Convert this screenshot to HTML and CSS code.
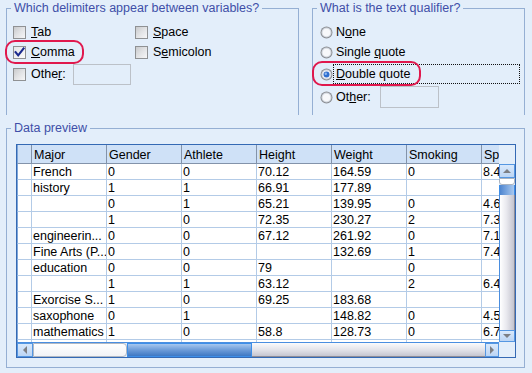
FILE: index.html
```html
<!DOCTYPE html>
<html lang="en">
<head>
<meta charset="utf-8">
<title>Text Import Wizard - Delimiters</title>
<link rel="stylesheet" href="styles.css">
</head>
<body>
<div class="dialog">
  <div class="top-row">
    <fieldset class="group group-delims">
      <legend>Which delimiters appear between variables?</legend>
      <div class="delim-grid">
        <div class="opt"><span class="cb"></span><span class="lbl"><u>T</u>ab</span></div>
        <div class="opt"><span class="cb"></span><span class="lbl"><u>S</u>pace</span></div>
        <div class="opt"><span class="cb cb-on"><svg class="check" width="11" height="11" viewBox="0 0 11 11"><path d="M1.6 5.2 L4.2 8.4 L9.6 1.4" fill="none" stroke="#1a2a8e" stroke-width="2.1" stroke-linecap="square"/></svg></span><span class="lbl"><u>C</u>omma</span></div>
        <div class="opt"><span class="cb"></span><span class="lbl">S<u>e</u>micolon</span></div>
        <div class="opt"><span class="cb"></span><span class="lbl">Othe<u>r</u>:</span><span class="field field-left"></span></div>
      </div>
    </fieldset>
    <fieldset class="group group-qual">
      <legend>What is the text qualifier?</legend>
      <div class="qual-list">
        <div class="opt">
          <svg class="rd" width="13" height="13" viewBox="0 0 13 13"><circle cx="6.5" cy="6.5" r="6" fill="#8a8d92"/><circle cx="6.5" cy="6.5" r="5" fill="#d6dbe2"/><circle cx="6.5" cy="6.5" r="3.8" fill="#f7f8fa"/></svg>
          <span class="rlbl">N<u>o</u>ne</span>
        </div>
        <div class="opt">
          <svg class="rd" width="13" height="13" viewBox="0 0 13 13"><circle cx="6.5" cy="6.5" r="6" fill="#8a8d92"/><circle cx="6.5" cy="6.5" r="5" fill="#d6dbe2"/><circle cx="6.5" cy="6.5" r="3.8" fill="#f7f8fa"/></svg>
          <span class="rlbl">Single <u>q</u>uote</span>
        </div>
        <div class="opt">
          <svg class="rd" width="13" height="13" viewBox="0 0 13 13"><circle cx="6.5" cy="6.5" r="6" fill="#8a8d92"/><circle cx="6.5" cy="6.5" r="5" fill="#d6dbe2"/><circle cx="6.5" cy="6.5" r="3.8" fill="#f7f8fa"/><circle cx="6.5" cy="6.5" r="3" fill="#2f6fcf"/><circle cx="5.8" cy="5.7" r="1.2" fill="#8fb8ee"/></svg>
          <span class="rlbl focus"><u>D</u>ouble quote</span>
        </div>
        <div class="opt">
          <svg class="rd" width="13" height="13" viewBox="0 0 13 13"><circle cx="6.5" cy="6.5" r="6" fill="#8a8d92"/><circle cx="6.5" cy="6.5" r="5" fill="#d6dbe2"/><circle cx="6.5" cy="6.5" r="3.8" fill="#f7f8fa"/></svg>
          <span class="rlbl">Ot<u>h</u>er:</span><span class="field field-right"></span>
        </div>
      </div>
    </fieldset>
  </div>

  <fieldset class="group group-preview">
    <legend>Data preview</legend>
    <div class="preview-body">
      <div class="grid-frame">
        <div class="thead">
          <div class="th rh"></div><div class="th">Major</div><div class="th">Gender</div><div class="th">Athlete</div><div class="th">Height</div><div class="th">Weight</div><div class="th">Smoking</div><div class="th last">Sp</div>
        </div>
        <div class="corner"></div>
        <div class="tbody">
          <div class="tr"><div class="td rh"></div><div class="td">French</div><div class="td">0</div><div class="td">0</div><div class="td">70.12</div><div class="td">164.59</div><div class="td">0</div><div class="td last">8.4</div></div>
          <div class="tr"><div class="td rh"></div><div class="td">history</div><div class="td">1</div><div class="td">1</div><div class="td">66.91</div><div class="td">177.89</div><div class="td"></div><div class="td last"></div></div>
          <div class="tr"><div class="td rh"></div><div class="td"></div><div class="td">0</div><div class="td">1</div><div class="td">65.21</div><div class="td">139.95</div><div class="td">0</div><div class="td last">4.6</div></div>
          <div class="tr"><div class="td rh"></div><div class="td"></div><div class="td">1</div><div class="td">0</div><div class="td">72.35</div><div class="td">230.27</div><div class="td">2</div><div class="td last">7.3</div></div>
          <div class="tr"><div class="td rh"></div><div class="td">engineerin...</div><div class="td">0</div><div class="td">0</div><div class="td">67.12</div><div class="td">261.92</div><div class="td">0</div><div class="td last">7.1</div></div>
          <div class="tr"><div class="td rh"></div><div class="td">Fine Arts (P...</div><div class="td">0</div><div class="td">0</div><div class="td"></div><div class="td">132.69</div><div class="td">1</div><div class="td last">7.4</div></div>
          <div class="tr"><div class="td rh"></div><div class="td">education</div><div class="td">0</div><div class="td">0</div><div class="td">79</div><div class="td"></div><div class="td">0</div><div class="td last"></div></div>
          <div class="tr"><div class="td rh"></div><div class="td"></div><div class="td">1</div><div class="td">1</div><div class="td">63.12</div><div class="td"></div><div class="td">2</div><div class="td last">6.4</div></div>
          <div class="tr"><div class="td rh"></div><div class="td">Exorcise S...</div><div class="td">1</div><div class="td">0</div><div class="td">69.25</div><div class="td">183.68</div><div class="td"></div><div class="td last"></div></div>
          <div class="tr"><div class="td rh"></div><div class="td">saxophone</div><div class="td">0</div><div class="td">1</div><div class="td"></div><div class="td">148.82</div><div class="td">0</div><div class="td last">4.5</div></div>
          <div class="tr"><div class="td rh"></div><div class="td">mathematics</div><div class="td">1</div><div class="td">0</div><div class="td">58.8</div><div class="td">128.73</div><div class="td">0</div><div class="td last">6.7</div></div>
          <div class="tr"><div class="td rh"></div><div class="td"></div><div class="td"></div><div class="td"></div><div class="td"></div><div class="td"></div><div class="td"></div><div class="td last"></div></div>
        </div>
        <div class="vscroll">
          <div class="sbtn vbtn-up"><span class="tri tri-up"></span></div>
          <div class="vthumb"></div>
          <div class="vblue"></div>
          <div class="vtrack"></div>
          <div class="sbtn vbtn-down"><span class="tri tri-down"></span></div>
        </div>
        <div class="hscroll">
          <div class="sbtn hbtn-left"><span class="tri tri-left"></span></div>
          <div class="hthumb"></div>
          <div class="hblue"></div>
          <div class="htrack"></div>
          <div class="sbtn hbtn-right"><span class="tri tri-right"></span></div>
        </div>
        <div class="corner"></div>
      </div>
    </div>
  </fieldset>

  <div class="mark mark-comma"></div>
  <div class="mark mark-dquote"></div>
</div>
</body>
</html>
```

FILE: styles.css
```css
* { box-sizing: border-box; }
html, body { margin: 0; padding: 0; }
body {
  width: 532px;
  height: 373px;
  overflow: hidden;
  background: #e3eefa;
  font-family: "Liberation Sans", Arial, sans-serif;
  font-size: 12.5px;
  color: #000;
}
u { text-decoration: underline; text-underline-offset: 1px; }

.dialog { position: relative; padding: 1px 7px 0 6px; }

.top-row { display: flex; gap: 13px; height: 114px; margin-bottom: 6px; }

.group {
  margin: 0;
  padding: 0;
  border: 1px solid #95afd3;
  min-width: 0;
  min-inline-size: 0;
}
.group legend {
  margin-left: 4px;
  padding: 0 3px;
  line-height: 14px;
  color: #3f4ea8;
  font-size: 12.5px;
}
.group-delims { width: 293px; height: 114px; border-bottom: none; }
.group-qual { width: 213px; height: 114px; border-bottom: none; }

.opt { display: flex; align-items: center; line-height: 14px; white-space: nowrap; }

.delim-grid {
  display: grid;
  grid-template-columns: 122px auto;
  grid-template-rows: 20px 20px 24px;
  padding: 7px 0 0 6px;
}
.cb {
  flex: none;
  width: 13px;
  height: 13px;
  margin-right: 5px;
  border: 1px solid #8f9193;
  background: linear-gradient(135deg, #c9cacc 0%, #e2e3e5 50%, #f6f6f7 100%);
}
.cb-on { background: linear-gradient(135deg, #e4e5e7 0%, #fbfbfb 100%); }
.check { display: block; overflow: visible; }

.field { display: block; flex: none; border: 1px solid #bcc1c8; }
.field-left { width: 58px; height: 21px; margin-left: 7px; }
.field-right { width: 59px; height: 22px; margin-left: 6px; }

.qual-list {
  display: grid;
  grid-template-rows: 20px 20px 24px 22px;
  padding: 7px 4px 0 7px;
}
.rd { display: block; flex: none; }
.rlbl {
  border: 1px dotted transparent;
  padding: 0 2px;
  line-height: 18px;
}
.rlbl.focus { flex: 1; border-color: #111; }

.group-preview { height: 247px; }
.preview-body { padding: 9px 8px 9px 9px; }

.grid-frame {
  width: 500px;
  height: 214px;
  border: 1px solid #3469b4;
  display: grid;
  grid-template-columns: 482px 16px;
  grid-template-rows: 19px 178px 15px;
  background: #e3eefa;
}

.thead, .tr {
  display: grid;
  grid-template-columns: 15px repeat(6, 75px) 17px;
}
.thead { overflow: hidden; background: #cfe1f7; }
.th {
  border-right: 1px solid #8393aa;
  border-bottom: 1px solid #8393aa;
  padding: 3px 0 0 2px;
  line-height: 14px;
  white-space: nowrap;
  overflow: hidden;
}
.th.rh { border-left: 1px solid #7ea6d8; }
.th.last, .td.last { border-right: none; }

.tbody { overflow: hidden; background: #fff; }
.td {
  height: 16px;
  border-right: 1px solid #b3cbe7;
  border-bottom: 1px solid #b3cbe7;
  padding: 2px 0 0 1px;
  line-height: 13px;
  white-space: nowrap;
  overflow: hidden;
  background: #fff;
}
.td.rh { border-left: 1px solid #7ea6d8; }

.corner { background: #e3eefa; }

.sbtn {
  display: flex;
  align-items: center;
  justify-content: center;
  background: linear-gradient(#d9e9fc, #bcd5f4);
  border: 1px solid #5597e2;
  flex: none;
}
.tri { width: 0; height: 0; display: block; }
.tri-up { border-left: 4px solid transparent; border-right: 4px solid transparent; border-bottom: 4px solid #7d7f84; }
.tri-down { border-left: 4px solid transparent; border-right: 4px solid transparent; border-top: 4px solid #7d7f84; }
.tri-left { border-top: 4px solid transparent; border-bottom: 4px solid transparent; border-right: 4px solid #7d7f84; }
.tri-right { border-top: 4px solid transparent; border-bottom: 4px solid transparent; border-left: 4px solid #7d7f84; }

.vscroll { display: flex; flex-direction: column; }
.vbtn-up { height: 14px; }
.vbtn-down { height: 12px; }
.vthumb {
  height: 7px;
  background: #fff;
  border: 1px solid #a9b3c0;
  border-radius: 0 0 3px 3px;
  flex: none;
}
.vblue {
  height: 10px;
  flex: none;
  background: linear-gradient(to right, #4f86d0, #a8c8ef);
  border-left: 1px solid #3d8ee8;
  border-right: 1px solid #3d8ee8;
}
.vtrack {
  flex: 1;
  background: linear-gradient(to right, #ffffff 0%, #e9e9ef 45%, #c4c4ce 100%);
  border-left: 1px solid #4a8ee0;
  border-right: 1px solid #8c8c98;
}

.hscroll { display: flex; border-top: 1px solid #4a8ee0; }
.hbtn-left { width: 16px; }
.hbtn-right { width: 14px; }
.hthumb {
  width: 94px;
  flex: none;
  background: linear-gradient(#ffffff, #f2f3f6);
  border: 1px solid #b0b8c4;
  border-radius: 0 4px 4px 0;
}
.hblue {
  width: 125px;
  flex: none;
  background: linear-gradient(#a6c7ef, #6c9bd8 50%, #3e78c3);
  border: 1px solid #3d8ee8;
}
.htrack {
  flex: 1;
  background: linear-gradient(#fbfbfc, #e4e4ea 50%, #c6c6d0);
  border-bottom: 1px solid #8c8c98;
}

.mark {
  position: absolute;
  border: 2px solid #e0184d;
  border-radius: 10px;
}
.mark-comma { left: 5px; top: 40px; width: 79px; height: 24px; }
.mark-dquote { left: 312px; top: 61px; width: 109px; height: 25px; }
```
